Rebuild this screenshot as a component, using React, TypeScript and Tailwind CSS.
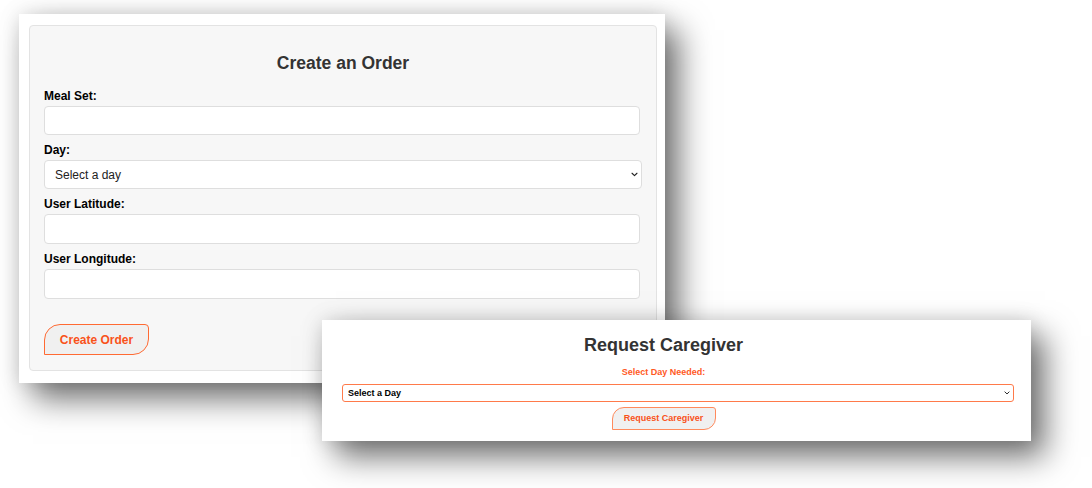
import React from "react";

const Chevron = ({ className }: { className: string }) => (
  <svg className={className} viewBox="0 0 10 6" fill="none">
    <path d="M1.5 1.2 L5 4.6 L8.5 1.2" stroke="#222" strokeWidth="1.6" strokeLinecap="round" strokeLinejoin="round" />
  </svg>
);

const Field = ({ label, children }: { label: string; children: React.ReactNode }) => (
  <div className="flex flex-col">
    <label className="text-[12px] leading-[14px] font-bold text-black mb-[3px]">{label}</label>
    {children}
  </div>
);

export default function App() {
  return (
    <div className="relative w-[1092px] h-[488px] bg-white overflow-hidden" style={{ fontFamily: '"Liberation Sans", Arial, sans-serif' }}>
      {/* Window 1 */}
      <div className="absolute left-[19px] top-[14px] w-[646px] h-[369px] bg-white shadow-[14px_16px_30px_rgba(0,0,0,0.55),0_0_20px_rgba(0,0,0,0.13)] pt-[11px] pl-[10px]">
        <div className="w-[628px] h-[346px] bg-[#f7f7f7] border border-[#e3e3e3] rounded-[4px] pt-[27px] px-[14px] flex flex-col">
          <h2 className="text-[17.5px] leading-[20px] font-bold text-[#333] text-center">Create an Order</h2>
          <div className="mt-[16px] flex flex-col gap-[8px]">
            <Field label="Meal Set:">
              <input className="block w-[596px] h-[29px] bg-white border border-[#dedede] rounded-[4px] outline-none" />
            </Field>
            <Field label="Day:">
              <div className="relative w-[598px] h-[29px]">
                <select className="block appearance-none w-full h-[29px] bg-white border border-[#dedede] rounded-[4px] pl-[10px] text-[12px] text-[#222] outline-none">
                  <option>Select a day</option>
                </select>
                <Chevron className="absolute right-[4px] top-[12px] w-[7px] h-[5px] pointer-events-none" />
              </div>
            </Field>
            <Field label="User Latitude:">
              <input className="block w-[596px] h-[30px] bg-white border border-[#dedede] rounded-[4px] outline-none" />
            </Field>
            <Field label="User Longitude:">
              <input className="block w-[596px] h-[30px] bg-white border border-[#dedede] rounded-[4px] outline-none" />
            </Field>
          </div>
          <div className="mt-[25px]">
            <button className="block w-[105px] h-[31px] bg-[#f0f0f0] border-[1.5px] border-[#ff6a33] rounded-tl-[16px] rounded-br-[16px] rounded-tr-[4px] rounded-bl-none text-[12px] font-bold text-[#f9521a]">
              Create Order
            </button>
          </div>
        </div>
      </div>

      {/* Window 2 */}
      <div className="absolute left-[322px] top-[320px] w-[709px] h-[121px] bg-white shadow-[14px_16px_30px_rgba(0,0,0,0.55),0_0_20px_rgba(0,0,0,0.13)] pt-[15px] flex flex-col">
        <h2 className="w-[683px] text-[18px] leading-[21px] font-bold text-[#333] text-center">Request Caregiver</h2>
        <div className="w-[683px] mt-[11px] text-[9px] leading-[11px] font-bold text-[#ff5a1f] text-center">Select Day Needed:</div>
        <div className="relative ml-[20px] mt-[6px] w-[672px] h-[18px]">
          <select className="block appearance-none w-full h-[18px] bg-white border-[1.5px] border-[#ff7a4a] rounded-[3px] pl-[5px] text-[9px] leading-[14px] font-bold text-black outline-none">
            <option>Select a Day</option>
          </select>
          <Chevron className="absolute right-[4px] top-[7px] w-[6px] h-[4px] pointer-events-none" />
        </div>
        <div className="w-[683px] mt-[5px] flex justify-center">
          <button className="block w-[104px] h-[23px] bg-[#f0f0f0] border-[1.5px] border-[#ff8a5c] rounded-tl-[12px] rounded-br-[12px] rounded-tr-[3px] rounded-bl-none text-[9px] font-bold text-[#f9521a]">
            Request Caregiver
          </button>
        </div>
      </div>
    </div>
  );
}
